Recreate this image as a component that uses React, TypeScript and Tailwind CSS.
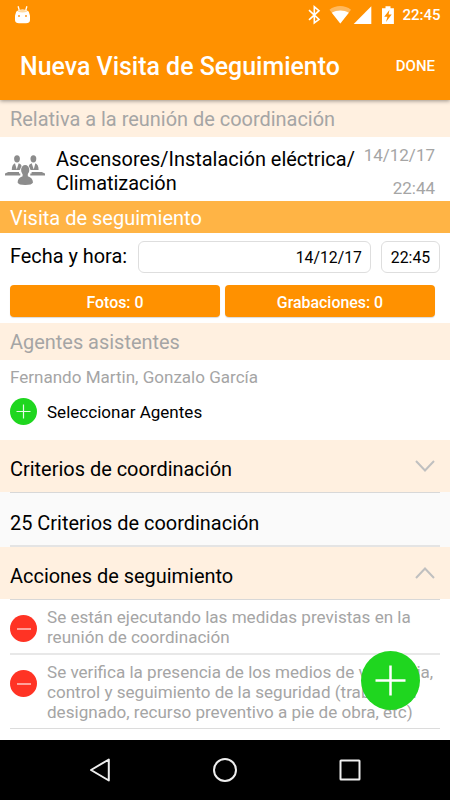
import React from "react";

function StatusBar() {
  return (
    <div className="flex h-[30px] items-center pl-[15px] pr-[9.5px]">
      <svg className="h-[18px] w-[15px]" viewBox="0 0 15 18">
        <path d="M3.1 0.2 4.2 4M11.9 0.2 10.8 4" stroke="#fff" strokeWidth="1.3" />
        <path d="M1.2 5.8Q2.6 3.6 7.5 3.4 12.4 3.6 13.8 5.8L15 9.5V14Q14.8 17.3 11 17.3H4Q.2 17.3 0 14V9.5Z" fill="#fff" />
        <path d="M2.4 5.6Q7.5 2 12.6 5.6 7.5 7.4 2.4 5.6Z" fill="#ffd9a0" />
        <rect x="3" y="9" width="2" height="2" fill="#ffb257" />
        <rect x="10" y="9" width="2" height="2" fill="#ffb257" />
      </svg>
      <svg className="ml-auto h-[20px] w-[92px]" viewBox="306 5 92 20">
        <path d="M309 10.2 319 19.4 314.3 23V6.8L319 10.7 309 19.8" fill="none" stroke="#fff" strokeWidth="1.6" />
        <path d="M329.5 9.7C335.5 4.8 345 4.8 351 9.7L340.3 23.5Z" fill="#ffb95e" />
        <path d="M331.8 12.8C337 9.8 343.6 9.8 348.8 12.8L340.3 23.5Z" fill="#fff" />
        <path d="M371.3 6.3V24H353.7Z" fill="#fff" />
        <path d="M382 8.2H385.5V6.2H390.5V8.2H393.9V24H382Z" fill="#fff" />
        <path d="M389.4 10 384.2 16.8H387.4L386 22 391.7 14.4H388.6Z" fill="#ff9100" />
      </svg>
      <span className="ml-[4px] mt-px text-[15px] font-medium leading-none">22:45</span>
    </div>
  );
}

function PeopleIcon() {
  return (
    <svg className="mt-[18px] h-[32px] w-[40px] shrink-0" viewBox="0 0 40 32" fill="#8c8c8c">
      <path d="M0 18.6 3.2 17H14V18.4H15.3V20.6H0ZM40 18.6 36.8 17H26.6V18.4H25.3V20.6H40Z" />
      <ellipse cx="12" cy="3.8" rx="2.9" ry="3.6" />
      <ellipse cx="28.4" cy="3.8" rx="2.9" ry="3.6" />
      <path d="M6.8 15Q6.8 9.5 10 8.2L11.7 14.5 13.7 8.2Q16.6 9.3 16.6 11L14.8 15ZM33.6 15Q33.6 9.5 30.4 8.2L28.7 14.5 26.7 8.2Q23.8 9.3 23.8 11L25.6 15Z" />
      <ellipse cx="20.2" cy="15" rx="4.1" ry="5" />
      <path d="M17.6 18H22.8V21.2Q27.7 22.5 28 27.5 27 30 20.2 30 13.4 30 12.6 27.5 12.8 22.5 17.6 21.2Z" />
    </svg>
  );
}

function Badge({ add }: { add?: boolean }) {
  return (
    <svg className="h-[27px] w-[27px] shrink-0" viewBox="0 0 27 27">
      <circle cx="13.5" cy="13.5" r="13.5" fill={add ? "#1fd61f" : "#ff3324"} />
      <path d={add ? "M6.5 13.5H20.5M13.5 6.5V20.5" : "M7 14H21"} stroke="#fff" strokeOpacity=".9" strokeWidth="1.2" />
    </svg>
  );
}

function Chevron({ up }: { up?: boolean }) {
  return (
    <svg className="ml-auto h-[12px] w-[20px]" viewBox="0 0 20 12" fill="none" stroke="#c0c0c0" strokeWidth="2">
      <path d={up ? "M1 11 10 1.5 19 11" : "M1 1 10 10.5 19 1"} />
    </svg>
  );
}

export default function App() {
  return (
    <div className="relative flex h-[800px] w-[450px] flex-col overflow-hidden bg-white font-['Roboto',sans-serif] text-black">
      <header className="z-10 h-[100px] shrink-0 bg-[#ff9100] text-white shadow-[0_1px_4px_rgba(0,0,0,0.4)]">
        <StatusBar />
        <div className="flex h-[70px] items-center justify-between pl-[20px] pr-[15px] pt-[3px]">
          <h1 className="text-[24.93px] font-medium">Nueva Visita de Seguimiento</h1>
          <button className="text-[15px] font-medium">DONE</button>
        </div>
      </header>

      <main className="flex h-[640px] shrink-0 flex-col overflow-hidden">
        <h2 className="h-[37px] shrink-0 bg-[#fff0e0] pl-[10px] text-[19.95px] leading-[39px] text-[#a5a5a5]">Relativa a la reunión de coordinación</h2>
        <section className="flex h-[64px] shrink-0 pl-[5px] pr-[15px]">
          <PeopleIcon />
          <p className="ml-[11px] mt-[11px] whitespace-nowrap text-[19.93px] leading-[24px]">Ascensores/Instalación eléctrica/<br />Climatización</p>
          <div className="ml-auto flex flex-col items-end pt-[7px] text-[17px] leading-[22px] text-[#a5a5a5]">
            <span>14/12/17</span>
            <span className="mt-[11px]">22:44</span>
          </div>
        </section>
        <h2 className="h-[32px] shrink-0 bg-[#ffb445] pl-[10px] text-[20px] leading-[34px] text-white">Visita de seguimiento</h2>
        <section className="flex h-[52px] shrink-0 items-center pb-[5px] pl-[10px] pr-[10px]">
          <span className="w-[127.5px] text-[19.9px]">Fecha y hora:</span>
          <div className="mt-[1px] flex h-[32px] w-[233.5px] items-center justify-end rounded-[6px] border border-[#dedede] pr-[8px] pt-[2px] text-[15.8px]">14/12/17</div>
          <div className="ml-[10px] mt-[1px] flex h-[32px] w-[59px] items-center justify-center rounded-[6px] border border-[#dedede] pt-[2px] text-[15.8px]">22:45</div>
        </section>
        <section className="flex h-[38px] shrink-0 gap-[5px] pl-[10px] pr-[15px]">
          <button className="h-[32px] flex-1 rounded-[4px] bg-[#ff9100] pt-[3px] text-[15.9px] font-medium text-white shadow-[0_1px_1px_rgba(0,0,0,0.15)]">Fotos: 0</button>
          <button className="h-[32px] flex-1 rounded-[4px] bg-[#ff9100] pt-[3px] text-[15.9px] font-medium text-white shadow-[0_1px_1px_rgba(0,0,0,0.15)]">Grabaciones: 0</button>
        </section>
        <h2 className="h-[37px] shrink-0 bg-[#fff0e0] pl-[10px] text-[19.95px] leading-[38px] text-[#a5a5a5]">Agentes asistentes</h2>
        <section className="flex h-[80px] shrink-0 flex-col pl-[10px]">
          <p className="mt-[7px] text-[17.05px] leading-[20px] text-[#a5a5a5]">Fernando Martin, Gonzalo García</p>
          <div className="mt-[11px] flex items-center gap-[10px] text-[17.05px]"><Badge add /><span className="mt-[2px]">Seleccionar Agentes</span></div>
        </section>
        <section className="flex h-[53px] shrink-0 flex-col bg-[linear-gradient(#fff0e0_52px,#fafafa_52px)] pl-[10px] pr-[10px]">
          <div className="flex flex-1 items-center border-b border-[#d8d8d8] pr-[5px] text-[19.95px]"><span className="mt-[8px]">Criterios de coordinación</span><Chevron /></div>
        </section>
        <section className="flex h-[54px] shrink-0 flex-col bg-[#fafafa] pl-[10px] pr-[10px]">
          <div className="flex flex-1 items-center border-b-2 border-[#e4e4e4] pt-[9px] text-[19.95px]">25 Criterios de coordinación</div>
        </section>
        <section className="flex h-[53px] shrink-0 flex-col bg-[linear-gradient(#fff0e0_52px,#fff_52px)] pl-[10px] pr-[10px]">
          <div className="flex flex-1 items-center border-b border-[#d8d8d8] pr-[5px] text-[19.95px]"><span className="mt-[8px]">Acciones de seguimiento</span><Chevron up /></div>
        </section>
        <section className="flex shrink-0 flex-col px-[10px] text-[17.07px] leading-[20px] text-[#a5a5a5]">
          <div className="flex h-[55px] gap-[10px] whitespace-nowrap border-b-2 border-[#e8e8e8]">
            <div className="pt-[15px]"><Badge /></div>
            <p className="pt-[7px]">Se están ejecutando las medidas previstas en la<br />reunión de coordinación</p>
          </div>
          <div className="flex h-[74px] gap-[10px] whitespace-nowrap border-b border-[#dcdcdc]">
            <div className="pt-[14.5px]"><Badge /></div>
            <p className="pt-[7px]">Se verifica la presencia de los medios de vigilancia,<br />control y seguimiento de la seguridad (trabajador<br />designado, recurso preventivo a pie de obra, etc)</p>
          </div>
          <p className="pl-[37px] pt-[8px]">Se verifica el cumplimiento de la</p>
        </section>
      </main>

      <nav className="h-[60px] shrink-0 bg-black">
        <svg className="h-[60px] w-[450px]" viewBox="0 0 450 60" fill="none" stroke="#eee" strokeWidth="2" strokeLinejoin="round">
          <path d="M108.8 19.5V40.5L91 30Z" />
          <circle cx="225" cy="30" r="11" />
          <rect x="340.5" y="20.5" width="19" height="19" rx=".5" />
        </svg>
      </nav>

      <button className="absolute left-[361px] top-[651px] h-[59px] w-[59px] rounded-full bg-[#1fd61f]">
        <svg viewBox="0 0 59 59" stroke="#fff" strokeWidth="2.5"><path d="M14.5 29.5H44.5M29.5 14.5V44.5" /></svg>
      </button>
    </div>
  );
}
